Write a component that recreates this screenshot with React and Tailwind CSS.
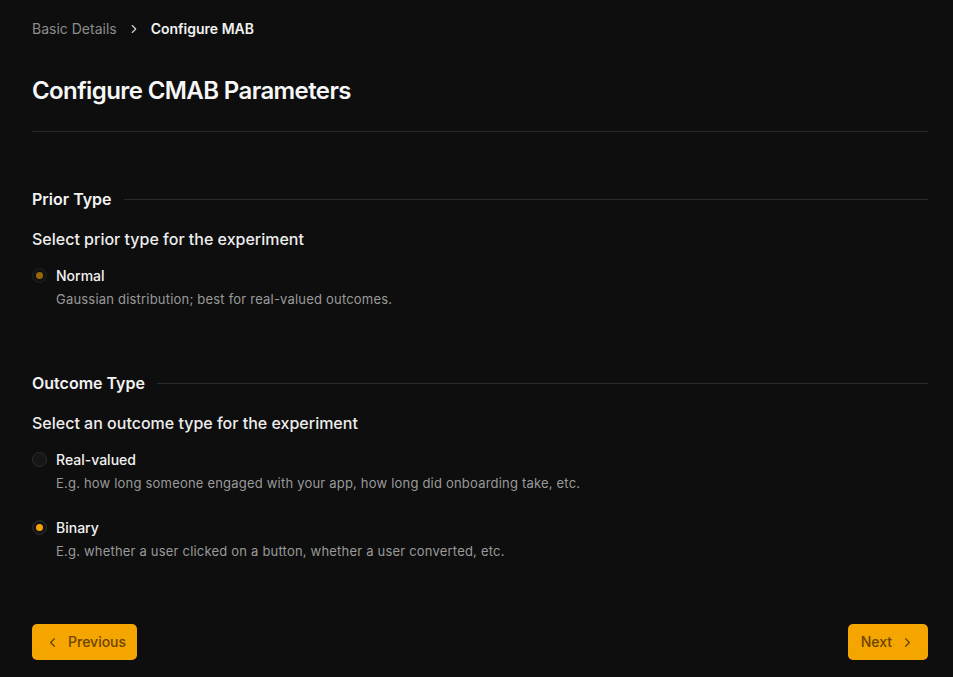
import { ChevronLeft, ChevronRight } from 'lucide-react'

function Radio({ checked, dim }) {
  return (
    <span
      className={`mt-[2px] flex h-[15px] w-[15px] shrink-0 items-center justify-center rounded-full border border-[#2e2e2e] bg-[#161616] ${dim ? 'opacity-60' : ''}`}
    >
      {checked && <span className="h-[7px] w-[7px] rounded-full bg-[#f5a300]" />}
    </span>
  )
}

function Option({ label, desc, checked, dim }) {
  return (
    <div className="flex gap-[9px]">
      <Radio checked={checked} dim={dim} />
      <div>
        <div className="text-sm font-medium leading-5 text-[#f2f2f2]">{label}</div>
        <div className="mt-[3px] text-[13px] leading-5 tracking-[0.2px] text-[#9a9a9a]">{desc}</div>
      </div>
    </div>
  )
}

function SectionHeader({ title }) {
  return (
    <div className="flex items-center gap-3">
      <h3 className="text-base font-semibold text-[#f2f2f2]">{title}</h3>
      <div className="h-px flex-1 bg-[#2a2a2a]" />
    </div>
  )
}

export default function App() {
  return (
    <div
      className="min-h-[677px] bg-[#0e0e0e] pl-8 pr-[25px] pt-[19px] text-white"
      style={{ fontFamily: 'Inter, "Noto Sans", sans-serif' }}
    >
      <nav className="flex items-center gap-[10px] text-sm leading-5">
        <span className="text-[#8c8c8c]">Basic Details</span>
        <ChevronRight size={14} strokeWidth={2} className="text-[#cfcfcf]" />
        <span className="font-semibold text-[#f2f2f2]">Configure MAB</span>
      </nav>

      <h1 className="mt-[36px] text-[24px] font-semibold leading-8 tracking-[-0.6px] text-[#f7f7f7]">
        Configure CMAB Parameters
      </h1>
      <div className="mt-[24px] h-px bg-[#2a2a2a]" />

      <section className="mt-[55px]">
        <SectionHeader title="Prior Type" />
        <p className="mt-[16px] text-base font-medium text-[#ededed]">
          Select prior type for the experiment
        </p>
        <div className="mt-[15px]">
          <Option
            label="Normal"
            desc="Gaussian distribution; best for real-valued outcomes."
            checked
            dim
          />
        </div>
      </section>

      <section className="mt-[62px]">
        <SectionHeader title="Outcome Type" />
        <p className="mt-[16px] text-base font-medium text-[#ededed]">
          Select an outcome type for the experiment
        </p>
        <div className="mt-[15px] flex flex-col gap-[25px]">
          <Option
            label="Real-valued"
            desc="E.g. how long someone engaged with your app, how long did onboarding take, etc."
          />
          <Option
            label="Binary"
            desc="E.g. whether a user clicked on a button, whether a user converted, etc."
            checked
          />
        </div>
      </section>

      <div className="mt-[63px] flex justify-between">
        <button className="flex h-9 items-center gap-2 rounded-[5px] bg-[#f5a500] pl-[13px] pr-[11px] text-sm font-medium text-[#6b4400]">
          <ChevronLeft size={15} strokeWidth={2} />
          Previous
        </button>
        <button className="flex h-9 items-center gap-2 rounded-[5px] bg-[#f5a500] pl-[13px] pr-[13px] text-sm font-medium text-[#6b4400]">
          Next
          <ChevronRight size={15} strokeWidth={2} />
        </button>
      </div>
    </div>
  )
}
